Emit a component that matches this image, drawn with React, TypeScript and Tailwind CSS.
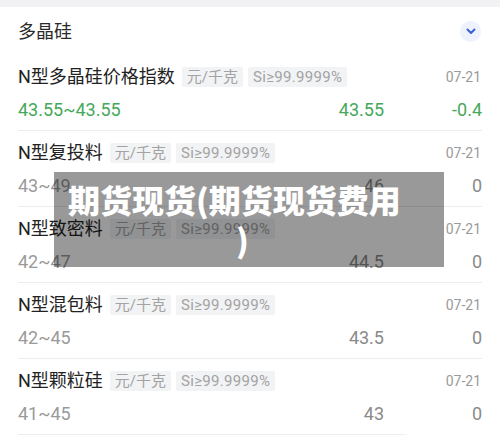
import React from "react";

type Row = {
  name: string;
  range: string;
  price: string;
  change: string;
  green?: boolean;
};

const rows: Row[] = [
  { name: "N型多晶硅价格指数", range: "43.55~43.55", price: "43.55", change: "-0.4", green: true },
  { name: "N型复投料", range: "43~49", price: "46", change: "0" },
  { name: "N型致密料", range: "42~47", price: "44.5", change: "0" },
  { name: "N型混包料", range: "42~45", price: "43.5", change: "0" },
  { name: "N型颗粒硅", range: "41~45", price: "43", change: "0" },
];

export default function App() {
  return (
    <div
      className="relative w-[500px] h-[439px] overflow-hidden bg-white"
      style={{ fontFamily: 'Roboto, "Noto Sans CJK SC", sans-serif' }}
    >
      <div className="h-[7px] bg-[#f2f2f4]" />
      <div className="flex h-[48px] items-center justify-between pl-[18px] pr-[19px]">
        <span className="text-[18px] text-[#2a2a2a]">多晶硅</span>
        <span className="flex h-[21px] w-[21px] items-center justify-center rounded-full bg-[#eef2fc]">
          <svg width="10" height="7" viewBox="0 0 10 7" fill="none">
            <path d="M1.5 1.5 L5 5 L8.5 1.5" stroke="#3d5fd9" strokeWidth="2" strokeLinecap="round" strokeLinejoin="round" />
          </svg>
        </span>
      </div>
      <div className="px-[18px]">
        {rows.map((r) => (
          <div key={r.name} className="border-b border-[#ececec] pt-[10px] pb-[9px]">
            <div className="flex h-6 items-center">
              <span className="text-[18px] leading-6 text-[#222]">{r.name}</span>
              <span className="ml-[7px] flex h-[20px] items-center rounded-[2px] bg-[#f2f3f5] px-[5px] text-[15px] text-[#a3a3a3]">
                元/千克
              </span>
              <span className="ml-[5px] flex h-[20px] items-center rounded-[2px] bg-[#f2f3f5] px-[5px] text-[15px] tracking-[0.3px] text-[#a3a3a3]">
                Si≥99.9999%
              </span>
              <span className="ml-auto pr-[1px] text-[14px] text-[#9a9a9a]">07-21</span>
            </div>
            <div className="mt-2 flex h-6 items-center text-[18px]">
              <span className={r.green ? "text-[#45a85a]" : "text-[#9a9a9a]"}>{r.range}</span>
              <span className={"ml-auto w-[120px] text-right " + (r.green ? "text-[#45a85a]" : "text-[#8a8a8a]")}>
                {r.price}
              </span>
              <span className={"w-[98px] text-right " + (r.green ? "text-[#45a85a]" : "text-[#8a8a8a]")}>
                {r.change}
              </span>
            </div>
          </div>
        ))}
      </div>

      <div className="absolute left-[54px] top-[172px] h-[95px] w-[390px] bg-black/40 pl-[14px] pt-[7px] text-left">
        <div
          className="text-[32px] font-black leading-[40px] text-white"
          style={{ fontFamily: '"Noto Sans CJK SC", sans-serif' }}
        >
          期货现货(期货现货费用
          <br />
          <span className="ml-[168px]">)</span>
        </div>
      </div>

      <div className="absolute left-[405px] top-[424px] h-[20px] w-[100px] bg-white blur-[3px]" />
    </div>
  );
}
